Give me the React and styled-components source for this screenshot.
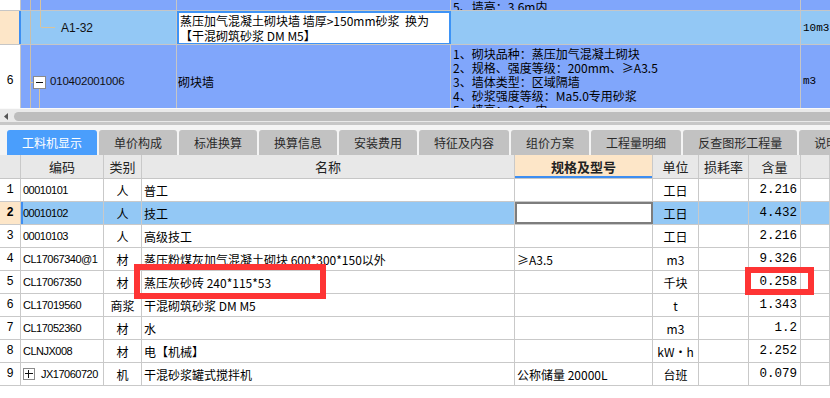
import styled, {createGlobalStyle} from "styled-components"

const GlobalStyle = createGlobalStyle`
    * { box-sizing: border-box; }
    html, body { margin: 0; padding: 0; background: #fff; }
    body {
        font-family: "Noto Sans CJK SC", "Liberation Sans", sans-serif;
        font-size: 12px;
        color: #000;
    }
`

const Page = styled.div`
    width: 830px;
    height: 398px;
    overflow: hidden;
    display: flex;
    flex-direction: column;
    background: #fff;
`

/* ---------- upper grid (list items) ---------- */

const TopGrid = styled.div`
    height: 108px;
    flex-shrink: 0;
    overflow: hidden;
`

const TopRow = styled.div`
    display: grid;
    grid-template-columns: 21px 156px 274px 350px 1fr;
    height: ${p => p.$h}px;
    border-bottom: 1px solid #c6c6c6;
    overflow: hidden;
    background: ${p => p.$sel ? "#93c8f5" : "#80a6fb"};
`

const TopNum = styled.div`
    display: flex;
    align-items: center;
    justify-content: center;
    font-family: "Liberation Mono", monospace;
    font-size: 12px;
    background: ${p => p.$sel ? "#fde6c8" : "#fff"};
    border-right: ${p => p.$sel ? "2px solid #3d8ef2" : "1px solid #c6c6c6"};
`

const TopCode = styled.div`
    position: relative;
    display: flex;
    align-items: center;
    padding-left: ${p => p.$indent}px;
    border-right: 1px solid #c6c6c6;
    font-family: "Liberation Sans", sans-serif;
    font-size: ${p => p.$fs || 12}px;
    letter-spacing: ${p => p.$ls || 0}px;
    color: #111;
    span { position: relative; }
`

const TreeArt = styled.svg`
    position: absolute;
    left: 0;
    top: 0;
`

const TopName = styled.div`
    display: flex;
    flex-direction: column;
    justify-content: ${p => p.$edit ? "flex-start" : "center"};
    padding: ${p => p.$edit ? "0 1px" : "0 0 0 1px"};
    line-height: 15px;
    font-size: 12px;
    background: ${p => p.$edit ? "#fff" : "transparent"};
    border: ${p => p.$edit ? "2px solid #3d93f6" : "none"};
    border-right: ${p => p.$edit ? "2px solid #3d93f6" : "1px solid #c6c6c6"};
    white-space: pre;
`

const TopDesc = styled.div`
    display: flex;
    flex-direction: column;
    justify-content: ${p => p.$bottom ? "flex-end" : "flex-start"};
    padding: ${p => p.$bottom ? "0 0 4px 2px" : "2px 0 0 2px"};
    line-height: 14px;
    font-size: 12px;
    border-right: 1px solid #c6c6c6;
    white-space: nowrap;
`

const TopUnit = styled.div`
    display: flex;
    align-items: center;
    padding-left: 2px;
    font-family: "Liberation Mono", monospace;
    font-size: 11px;
    white-space: nowrap;
`

/* ---------- scroll bar + tabs ---------- */

const ScrollTrack = styled.div`
    height: 14px;
    flex-shrink: 0;
    display: flex;
    align-items: center;
    padding: 1px 0 0 4px;
    background: #e9e9e9;
    border-top: 1px solid #fafafa;
`

const ScrollThumb = styled.div`
    flex: 1;
    height: 9px;
    margin-left: 6px;
    border-radius: 5px 0 0 5px;
    background: #bdbdbd;
`

const ScrollEdge = styled.div`
    height: 3px;
    flex-shrink: 0;
    background: #c7c7c7;
`

const TabStrip = styled.div`
    height: 30px;
    flex-shrink: 0;
    display: flex;
    align-items: flex-end;
    gap: 2px;
    padding-left: 7px;
    background: #f4f4f4;
`

const Tab = styled.div`
    flex-shrink: 0;
    height: 25px;
    line-height: 25px;
    padding: 0 15px;
    font-size: 12px;
    white-space: nowrap;
    border-radius: 3px 3px 0 0;
    background: ${p => p.$active ? "#4a9efc" : "#c2c2c2"};
    color: ${p => p.$active ? "#fff" : "#2a2a2a"};
`

/* ---------- lower table (resources) ---------- */

const Table = styled.div`
    position: relative;
    flex: 1;
`

const cols = "21px 83px 38px 373px 138px 46px 50px 52px 1fr"

const HeadRow = styled.div`
    display: grid;
    grid-template-columns: ${cols};
    height: 24px;
    background: #e8e8e8;
    border-bottom: 1px solid #c6c6c6;
`

const HeadCell = styled.div`
    display: flex;
    align-items: center;
    justify-content: center;
    font-size: 13px;
    color: #222;
    border-right: 1px solid #c9c9c9;
    font-weight: ${p => p.$strong ? 700 : 400};
    background: ${p => p.$strong ? "#fde6c8" : "transparent"};
    box-shadow: ${p => p.$strong ? "inset 0 -2px 0 #3d8ef2" : "none"};
`

const DataRow = styled.div`
    display: grid;
    grid-template-columns: ${cols};
    height: 23px;
    border-bottom: 1px solid #c9c9c9;
    background: ${p => p.$sel ? "#93c8f5" : "#fff"};
`

const Cell = styled.div`
    display: flex;
    align-items: center;
    justify-content: ${p => p.$align === "center" ? "center" : p.$align === "right" ? "flex-end" : "flex-start"};
    padding: 0 ${p => p.$align === "right" ? "3px" : "0"} 0 ${p => p.$align ? "0" : "2px"};
    border-right: 1px solid #c9c9c9;
    white-space: nowrap;
    overflow: hidden;
    font-size: 12px;
`

const NumCell = styled(Cell)`
    justify-content: center;
    padding: 0;
    font-family: "Liberation Mono", monospace;
    font-weight: ${p => p.$sel ? 700 : 400};
    background: ${p => p.$sel ? "#fde6c8" : "#fff"};
`

const CodeCell = styled(Cell)`
    gap: 6px;
    font-family: "Liberation Sans", sans-serif;
    font-size: 11px;
    letter-spacing: -0.5px;
    box-shadow: ${p => p.$sel ? "inset 2px 0 0 #3d8ef2" : "none"};
`

const SpecCell = styled(Cell)`
    background: ${p => p.$edit ? "#fff" : "transparent"};
    border: ${p => p.$edit ? "2px solid #7d7d7d" : "none"};
    border-right: ${p => p.$edit ? "2px solid #7d7d7d" : "1px solid #c9c9c9"};
`

const QtyCell = styled(Cell)`
    font-family: "Liberation Mono", monospace;
    font-size: 12.5px;
`

const PlusBox = styled.span`
    width: 12px;
    height: 12px;
    display: inline-flex;
    align-items: center;
    justify-content: center;
    border: 1px solid #8a8a8a;
    background: #fff;
`

const Mark = styled.div`
    position: absolute;
    left: ${p => p.$x}px;
    top: ${p => p.$y}px;
    width: ${p => p.$w}px;
    height: ${p => p.$h}px;
    border: 6px solid #fe3434;
    pointer-events: none;
`

const tabs = ["工料机显示", "单价构成", "标准换算", "换算信息", "安装费用", "特征及内容", "组价方案", "工程量明细", "反查图形工程量", "说明信息"]

const rows = [
    {n: 1, code: "00010101", type: "人", name: "普工", unit: "工日", qty: "2.216"},
    {n: 2, code: "00010102", type: "人", name: "技工", unit: "工日", qty: "4.432", sel: true},
    {n: 3, code: "00010103", type: "人", name: "高级技工", unit: "工日", qty: "2.216"},
    {n: 4, code: "CL17067340@1", type: "材", name: "蒸压粉煤灰加气混凝土砌块 600*300*150以外", spec: "≥A3.5", unit: "m3", qty: "9.326"},
    {n: 5, code: "CL17067350", type: "材", name: "蒸压灰砂砖 240*115*53", unit: "千块", qty: "0.258"},
    {n: 6, code: "CL17019560", type: "商浆", name: "干混砌筑砂浆 DM M5", unit: "t", qty: "1.343"},
    {n: 7, code: "CL17052360", type: "材", name: "水", unit: "m3", qty: "1.2"},
    {n: 8, code: "CLNJX008", type: "材", name: "电【机械】", unit: "kW·h", qty: "2.252"},
    {n: 9, code: "JX17060720", type: "机", name: "干混砂浆罐式搅拌机", spec: "公称储量 20000L", unit: "台班", qty: "0.079", plus: true},
]

const desc6 = [
    "1、砌块品种：蒸压加气混凝土砌块",
    "2、规格、强度等级：200mm、≥A3.5",
    "3、墙体类型：区域隔墙",
    "4、砂浆强度等级：Ma5.0专用砂浆",
    "5、墙高：3.6m内",
]

const tan = "#d9c49c"
const guide = "#cbbfa8"

// tree connectors in the code column
const Tree = ({kind, h}) => (
    <TreeArt width="40" height={h} shapeRendering="crispEdges">
        <line x1="9.5" y1="0" x2="9.5" y2={h} stroke={guide} />
        {kind === "pipe" && <line x1="19.5" y1="0" x2="19.5" y2={h} stroke={tan} />}
        {kind === "leaf" && (
            <>
                <line x1="19.5" y1="0" x2="19.5" y2="16" stroke={tan} />
                <line x1="19.5" y1="16.5" x2="34" y2="16.5" stroke={tan} />
            </>
        )}
        {kind === "minus" && (
            <>
                <line x1="10" y1="37.5" x2="12" y2="37.5" stroke={tan} />
                <line x1="18.5" y1="44" x2="18.5" y2={h} stroke={tan} />
                <rect x="12.5" y="31.5" width="12" height="12" fill="#fff" stroke="#8a8a8a" />
                <line x1="15" y1="37.5" x2="22" y2="37.5" stroke="#111" />
            </>
        )}
    </TreeArt>
)

export default function App() {
    return (
        <Page>
            <GlobalStyle />
            <TopGrid>
                <TopRow $h={11}>
                    <TopNum />
                    <TopCode $indent={40}><Tree kind="pipe" h={11} /></TopCode>
                    <TopName />
                    <TopDesc $bottom><div>5、墙高：3.6m内</div></TopDesc>
                    <TopUnit />
                </TopRow>
                <TopRow $h={34} $sel>
                    <TopNum $sel />
                    <TopCode $indent={40}>
                        <Tree kind="leaf" h={34} />
                        <span>A1-32</span>
                    </TopCode>
                    <TopName $edit>
                        <div>蒸压加气混凝土砌块墙 墙厚&gt;150mm砂浆  换为</div>
                        <div>【干混砌筑砂浆 DM M5】</div>
                    </TopName>
                    <TopDesc />
                    <TopUnit>10m3</TopUnit>
                </TopRow>
                <TopRow $h={73}>
                    <TopNum>6</TopNum>
                    <TopCode $indent={29} $fs={11.5} $ls={-0.2}>
                        <Tree kind="minus" h={73} />
                        <span>010402001006</span>
                    </TopCode>
                    <TopName>砌块墙</TopName>
                    <TopDesc>
                        {desc6.map(line => <div key={line}>{line}</div>)}
                    </TopDesc>
                    <TopUnit>m3</TopUnit>
                </TopRow>
            </TopGrid>

            <ScrollTrack>
                <svg width="4" height="7" viewBox="0 0 4 7">
                    <path d="M4 0 L0 3.5 L4 7 Z" fill="#555" />
                </svg>
                <ScrollThumb />
            </ScrollTrack>
            <ScrollEdge />

            <TabStrip>
                {tabs.map((t, i) => <Tab key={t} $active={i === 0}>{t}</Tab>)}
            </TabStrip>

            <Table>
                <HeadRow>
                    <HeadCell />
                    <HeadCell>编码</HeadCell>
                    <HeadCell>类别</HeadCell>
                    <HeadCell>名称</HeadCell>
                    <HeadCell $strong>规格及型号</HeadCell>
                    <HeadCell>单位</HeadCell>
                    <HeadCell>损耗率</HeadCell>
                    <HeadCell>含量</HeadCell>
                    <HeadCell />
                </HeadRow>
                {rows.map(r => (
                    <DataRow key={r.n} $sel={r.sel}>
                        <NumCell $sel={r.sel}>{r.n}</NumCell>
                        <CodeCell $sel={r.sel}>
                            {r.plus && (
                                <PlusBox>
                                    <svg width="8" height="8" shapeRendering="crispEdges">
                                        <line x1="0" y1="3.5" x2="8" y2="3.5" stroke="#111" />
                                        <line x1="3.5" y1="0" x2="3.5" y2="8" stroke="#111" />
                                    </svg>
                                </PlusBox>
                            )}
                            {r.code}
                        </CodeCell>
                        <Cell $align="center">{r.type}</Cell>
                        <Cell>{r.name}</Cell>
                        <SpecCell $edit={r.sel}>{r.spec}</SpecCell>
                        <Cell $align="center">{r.unit}</Cell>
                        <Cell />
                        <QtyCell $align="right">{r.qty}</QtyCell>
                        <Cell />
                    </DataRow>
                ))}
                <Mark $x={134} $y={109} $w={192} $h={35} />
                <Mark $x={745} $y={112} $w={69} $h={28} />
            </Table>
        </Page>
    )
}
